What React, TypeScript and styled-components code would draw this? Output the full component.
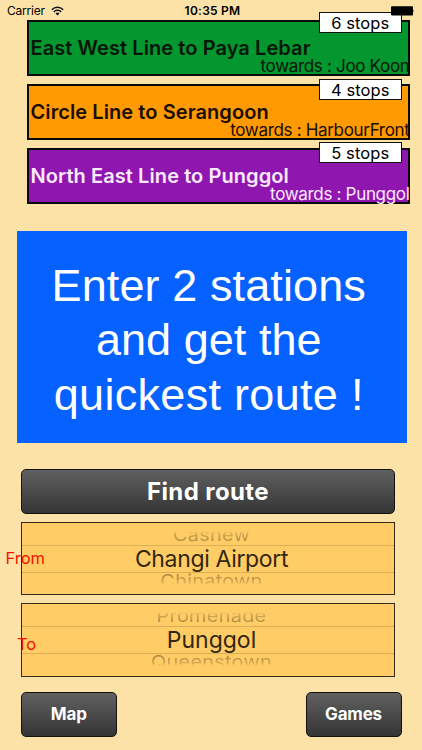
import React from 'react';
import styled, { createGlobalStyle } from 'styled-components';

const GlobalStyle = createGlobalStyle`
  * { box-sizing: border-box; }
  body { margin: 0; background: #fde2a8; }
`;

const Screen = styled.main`
  width: 422px;
  height: 750px;
  overflow: hidden;
  display: flex;
  flex-direction: column;
  background: #fde2a8;
  color: #000;
  font-family: Inter, Roboto, sans-serif;
  white-space: nowrap;
`;

const StatusBar = styled.header`
  position: relative;
  z-index: 1;
  flex: none;
  height: 20px;
  padding: 1px 7px 0 7px;
  display: grid;
  grid-template-columns: 1fr auto 1fr;
  align-items: center;
  font-size: 12px;
  line-height: 20px;
`;

const Carrier = styled.div`
  display: flex;
  align-items: center;
  gap: 6px;
  letter-spacing: -0.2px;
`;

const Clock = styled.div`
  font-weight: 600;
  letter-spacing: 0.25px;
  padding-left: 3px;
`;

const BatteryIcon = styled.svg`
  justify-self: end;
  z-index: 2;
`;

const Routes = styled.section`
  flex: none;
  display: flex;
  flex-direction: column;
  gap: 8px;
  margin: 0 12.5px 0 27px;
`;

const RouteCard = styled.article<{ $fill: string; $ink: string }>`
  position: relative;
  display: flex;
  align-items: center;
  height: 56px;
  padding-left: 1.5px;
  border: 2px solid #0a0a08;
  background: ${(p) => p.$fill};
  color: ${(p) => p.$ink};
`;

const RouteTitle = styled.h2`
  margin: 0;
  font-size: 20px;
  line-height: 20px;
  font-weight: 600;
  letter-spacing: 0.08px;
`;

const Towards = styled.span`
  position: absolute;
  right: -2px;
  bottom: -2px;
  font-size: 17px;
  line-height: 20px;
  letter-spacing: -0.32px;
`;

const Stops = styled.span<{ $lift: number }>`
  position: absolute;
  top: ${(p) => -p.$lift - 2}px;
  right: 6px;
  width: 82.5px;
  height: 21px;
  display: flex;
  align-items: center;
  justify-content: center;
  border: 1px solid #111;
  background: #fff;
  color: #000;
  font-size: 16.5px;
  line-height: 18px;
  letter-spacing: 0.1px;
`;

const Banner = styled.section`
  flex: none;
  margin: 26.5px 15px 0 16.5px;
  height: 212.5px;
  padding: 28px 6px 0 0;
  background: #0561ff;
  color: #fff;
  font: 45px/54.7px "Liberation Sans", Arial, sans-serif;
  text-align: center;
`;

const Line = styled.div<{ $track: number }>`
  letter-spacing: ${(p) => p.$track}px;
`;

const Controls = styled.section`
  flex: none;
  display: flex;
  flex-direction: column;
  gap: 8px;
  margin: 25.5px 27px 0 21px;
`;

const Button = styled.button<{ $size: number; $width?: number }>`
  width: ${(p) => (p.$width ? `${p.$width}px` : '100%')};
  height: 45px;
  padding: 0;
  border: 1px solid #14110c;
  border-radius: 5px;
  background: linear-gradient(#606060, #353535);
  color: #fff;
  font-family: inherit;
  font-weight: 700;
  font-size: ${(p) => p.$size}px;
  letter-spacing: ${(p) => (p.$size > 20 ? 0.4 : -0.2)}px;
`;

const Picker = styled.div`
  position: relative;
  height: 73.5px;
  display: grid;
  grid-template-rows: 22px 28px 1fr;
  border: 1px solid #33290f;
  background: #ffcc66;
  text-align: center;
`;

const Selected = styled.div<{ $track: number }>`
  border: solid #dcae55;
  border-width: 1px 0;
  color: #33270f;
  font-size: 23px;
  line-height: 26px;
  letter-spacing: ${(p) => p.$track}px;
  padding-left: 7px;
`;

const Neighbour = styled.div<{ $side: 'above' | 'below' }>`
  height: 22px;
  padding-left: 7px;
  color: #a8853f;
  font-size: 20px;
  line-height: 22px;
  letter-spacing: 0.2px;
  transform: ${(p) => (p.$side === 'above' ? 'translateY(1.5px)' : 'translateY(-3.4px)')} scaleY(0.85);
  mask-image: ${(p) =>
    p.$side === 'above'
      ? 'linear-gradient(transparent 6px, rgba(0, 0, 0, 0.45) 9px, #000 19px)'
      : 'linear-gradient(#000 3px, rgba(0, 0, 0, 0.45) 13px, transparent 16px)'};
`;

const PickerLabel = styled.span<{ $x: number; $y: number }>`
  position: absolute;
  left: ${(p) => p.$x}px;
  top: ${(p) => p.$y}px;
  color: #f01400;
  font-size: 16.5px;
  line-height: 20px;
`;

const Footer = styled.footer`
  flex: none;
  display: flex;
  justify-content: space-between;
  margin: 15px 20.5px 0 21px;
`;

type Route = { title: string; towards: string; stops: number; fill: string; ink: string; lift: number };

const routes: Route[] = [
  { title: 'East West Line to Paya Lebar', towards: 'Joo Koon', stops: 6, fill: '#04962f', ink: '#071507', lift: 8 },
  { title: 'Circle Line to Serangoon', towards: 'HarbourFront', stops: 4, fill: '#ff9a02', ink: '#1a0d00', lift: 5 },
  { title: 'North East Line to Punggol', towards: 'Punggol', stops: 5, fill: '#8f17b0', ink: '#fbeaff', lift: 6 },
];

function Wifi() {
  return (
    <svg width="13" height="10" viewBox="0 0 13 10" fill="none" stroke="#111" strokeWidth="1.5">
      <path d="M.8 3.7a8.1 8.1 0 0 1 11.4 0M2.8 5.9a5.2 5.2 0 0 1 7.4 0" />
      <path d="M6.5 9.5 4.5 7.5a2.8 2.8 0 0 1 4 0z" fill="#111" stroke="none" />
    </svg>
  );
}

export default function App() {
  return (
    <>
      <GlobalStyle />
      <Screen>
        <StatusBar>
          <Carrier>
            Carrier
            <Wifi />
          </Carrier>
          <Clock>10:35 PM</Clock>
          <BatteryIcon width="25" height="10" viewBox="0 0 25 10">
            <rect x="1" y="0.3" width="22" height="9.2" rx="1" fill="#000" />
            <path d="M23.6 3.4q1.2 1.5 0 3z" fill="#000" />
          </BatteryIcon>
        </StatusBar>
        <Routes>
          {routes.map((r) => (
            <RouteCard key={r.title} $fill={r.fill} $ink={r.ink}>
              <RouteTitle>{r.title}</RouteTitle>
              <Towards>towards : {r.towards}</Towards>
              <Stops $lift={r.lift}>{r.stops} stops</Stops>
            </RouteCard>
          ))}
        </Routes>
        <Banner>
          <Line $track={0.1}>Enter 2 stations</Line>
          <Line $track={0.05}>and get the</Line>
          <Line $track={0.3}>quickest route !</Line>
        </Banner>
        <Controls>
          <Button $size={24}>Find route</Button>
          <Picker>
            <Neighbour $side="above">Cashew</Neighbour>
            <Selected $track={-0.35}>Changi Airport</Selected>
            <Neighbour $side="below">Chinatown</Neighbour>
            <PickerLabel $x={-16.5} $y={25}>From</PickerLabel>
          </Picker>
          <Picker>
            <Neighbour $side="above">Promenade</Neighbour>
            <Selected $track={0}>Punggol</Selected>
            <Neighbour $side="below">Queenstown</Neighbour>
            <PickerLabel $x={-5} $y={30}>To</PickerLabel>
          </Picker>
        </Controls>
        <Footer>
          <Button $size={17} $width={95.5}>Map</Button>
          <Button $size={17} $width={96}>Games</Button>
        </Footer>
      </Screen>
    </>
  );
}
